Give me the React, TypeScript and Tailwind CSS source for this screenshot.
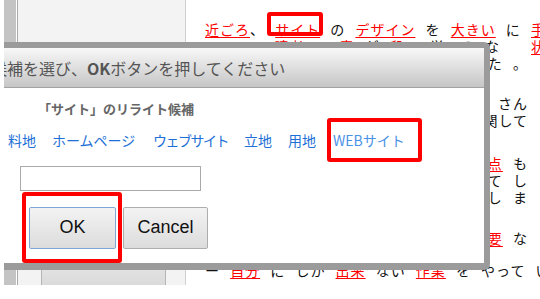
import React from "react";

const R = ({ children, className = "" }: { children: React.ReactNode; className?: string }) => (
  <span className={"text-[#ff0000] underline decoration-[#ff0000] underline-offset-[2px] " + className}>{children}</span>
);

export default function App() {
  return (
    <div className="relative w-[540px] h-[299px] overflow-hidden bg-white">
      <div className="relative ml-1 h-full overflow-hidden">
        {/* background page */}
        <div className="flex h-full">
          <div className="w-[12px] h-[285px] shrink-0 bg-[#c4c4c4]" />
          <div className="w-[1px] h-[285px] shrink-0 bg-white" />
          <div className="w-[1px] h-[285px] shrink-0 bg-[#a9a9a9]" />
          <div className="w-[168px] h-[285px] shrink-0 bg-[#f3f3f3] border-r border-[#d0d0d0] flex flex-col justify-end">
            <div className="ml-[23px] w-[125px] h-[45px] border-x border-[#b5b5b5] bg-linear-to-b from-[#f0f0f0] to-[#dadada] pt-[14px] text-center text-[13px] leading-[17px] text-[#333] font-['Noto_Sans_CJK_JP',sans-serif]">
              トップページ
            </div>
          </div>
          <div className="shrink-0 w-[380px] pl-[19px] pt-[21px] text-[14px] leading-[17px] tracking-[1px] [word-spacing:6px] text-[#111] font-['Noto_Sans_CJK_JP',sans-serif]">
            <div className="whitespace-nowrap">
              <R>近ごろ</R>、 <span className="relative"><R>サイト</R><span className="absolute -left-[8px] -right-[3px] -top-[7px] h-[24px] border-4 border-[#ff0000] rounded-[3px]" /></span> の <R>デザイン</R> を <R>大きい</R> に <R>手軽</R>
            </div>
            <div className="w-[341px] text-right whitespace-nowrap">
              <R>読者</R> の <R>素</R> が <R>段い</R> 学べる な<span className="ml-[31px]"><R>状</R></span>
            </div>
            <div className="w-[323px] text-right whitespace-nowrap">
              デザイン が 多く なって き た 。
            </div>
            <div className="mt-[23px] w-[323px] text-right whitespace-nowrap">
              ブログ を 始めた ばかりの <R>初心者</R> さん
            </div>
            <div className="w-[323px] text-right whitespace-nowrap">
              の 方 に とって は 特に これ に 関して
            </div>
            <div className="mt-[26px] w-[323px] text-right whitespace-nowrap">
              サイト を 作る 上 で 大切な <R>点</R> も
            </div>
            <div className="w-[323px] text-right whitespace-nowrap">
              あり ます が 忘れ がち に なって し
            </div>
            <div className="w-[323px] text-right whitespace-nowrap">
              まう こと が 多い の で 注意 し ま
            </div>
            <div className="mt-[24px] w-[323px] text-right whitespace-nowrap">
              それ が 一番 <R>重要</R> な
            </div>
            <div className="mt-[15px] whitespace-nowrap">
              ー <R>自分</R> に しか <R>出来</R> ない <R>作業</R> を やって い
            </div>
          </div>
        </div>

        {/* dialog */}
        <div className="absolute left-[-34px] top-[42px] w-[520px] h-[228px] rounded-[6px] bg-[#9b9b9b] p-[6px] pb-[7px] flex flex-col">
          <div className="flex-1 bg-white flex flex-col">
            <div className="h-[40px] shrink-0 border-b border-[#a3a3a3] bg-linear-to-b from-[#f8f8f8] to-[#c6c6c6] flex items-center pl-[15px] whitespace-nowrap text-[16px] text-[#555] font-['Noto_Sans_CJK_JP',sans-serif]">
              候補を選び、<span className="font-bold">OK</span>ボタンを押してください
            </div>
            <div className="mt-[11px] pl-[62px] text-[13px] leading-[19px] font-bold text-[#666] font-['Noto_Sans_CJK_JP',sans-serif] whitespace-nowrap">
              「サイト」のリライト候補
            </div>
            <div className="flex items-center pl-[32px] h-[44px] text-[14px] text-[#1e70d6] font-['Noto_Sans_CJK_JP',sans-serif] whitespace-nowrap">
              <span className="w-[44px] shrink-0">料地</span>
              <span className="w-[101px] shrink-0">ホームページ</span>
              <span className="w-[91px] shrink-0 tracking-[-1.5px]">ウェブサイト</span>
              <span className="w-[44px] shrink-0">立地</span>
              <span className="w-[39px] shrink-0">用地</span>
              <span className="w-[95px] h-[44px] shrink-0 border-4 border-[#ff0000] rounded-[3px] pl-[2px] flex items-center text-[#4a92e6]">WEBサイト</span>
            </div>
            <div className="mt-[4px] ml-[44px] w-[181px] h-[25px] border border-[#a9a9a9] bg-white" />
            <div className="mt-[1px] ml-[46px] flex items-center font-['Liberation_Sans',Arial,sans-serif] text-[18px] text-[#111]">
              <div className="w-[100px] h-[71px] border-4 border-[#ff0000] rounded-[3px] pl-[3px] flex items-center">
                <div className="w-[87px] h-[42px] border border-[#7fa6d8] rounded-[2px] bg-linear-to-b from-[#f3f3f3] to-[#dcdcdc] flex items-center justify-center">
                  OK
                </div>
              </div>
              <div className="ml-[1px] w-[85px] h-[42px] border border-[#adadad] rounded-[2px] bg-linear-to-b from-[#f3f3f3] to-[#dcdcdc] flex items-center justify-center">
                Cancel
              </div>
            </div>
          </div>
        </div>
      </div>
    </div>
  );
}
